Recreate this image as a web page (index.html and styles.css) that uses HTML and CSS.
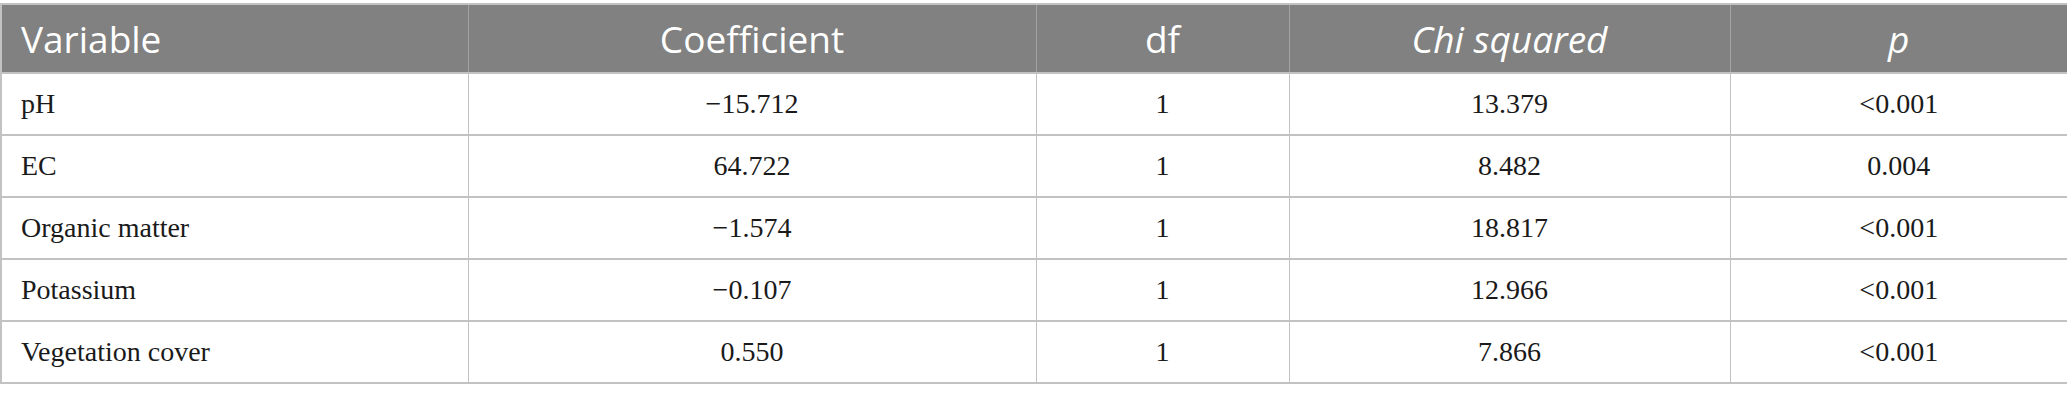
FILE: index.html
```html
<!DOCTYPE html>
<html>
<head>
<meta charset="utf-8">
<link rel="stylesheet" href="styles.css">
</head>
<body>
<table class="data">
  <colgroup>
    <col class="c1"><col class="c2"><col class="c3"><col class="c4"><col class="c5">
  </colgroup>
  <thead>
    <tr>
      <th class="left">Variable</th>
      <th>Coefficient</th>
      <th>df</th>
      <th><em>Chi squared</em></th>
      <th><em>p</em></th>
    </tr>
  </thead>
  <tbody>
    <tr><td class="left">pH</td><td>−15.712</td><td>1</td><td>13.379</td><td>&lt;0.001</td></tr>
    <tr><td class="left">EC</td><td>64.722</td><td>1</td><td>8.482</td><td>0.004</td></tr>
    <tr><td class="left">Organic matter</td><td>−1.574</td><td>1</td><td>18.817</td><td>&lt;0.001</td></tr>
    <tr><td class="left">Potassium</td><td>−0.107</td><td>1</td><td>12.966</td><td>&lt;0.001</td></tr>
    <tr><td class="left">Vegetation cover</td><td>0.550</td><td>1</td><td>7.866</td><td>&lt;0.001</td></tr>
  </tbody>
</table>
</body>
</html>
```
FILE: styles.css
```css
html, body {
  margin: 0;
  padding: 0;
  background: #ffffff;
}
body {
  padding-top: 3px;
}
.data {
  width: 2067px;
  table-layout: fixed;
  border-collapse: collapse;
  border: 2px solid #c2c2c2;
}
.c1 { width: 467px; }
.c2 { width: 568px; }
.c3 { width: 253px; }
.c4 { width: 441px; }
.c5 { width: 338px; }

.data th {
  height: 67px;
  background: #808180;
  color: #ffffff;
  font-family: "Open Sans", "Noto Sans", sans-serif;
  font-weight: normal;
  font-size: 37px;
  text-align: center;
  padding: 0 20px;
  border-left: 1px solid #a3a3a3;
  border-right: 1px solid #a3a3a3;
  border-bottom: 2px solid #c2c2c2;
}
.data th em {
  font-style: italic;
}
.data td {
  height: 60px;
  font-family: "Liberation Serif", "Times New Roman", serif;
  font-size: 28px;
  color: #1a1a1a;
  text-align: center;
  padding: 0 20px;
  border-top: 2px solid #c2c2c2;
  border-bottom: 2px solid #c2c2c2;
  border-left: 1px solid #c2c2c2;
  border-right: 1px solid #c2c2c2;
}
.data .left {
  text-align: left;
  padding-left: 19px;
}
```
